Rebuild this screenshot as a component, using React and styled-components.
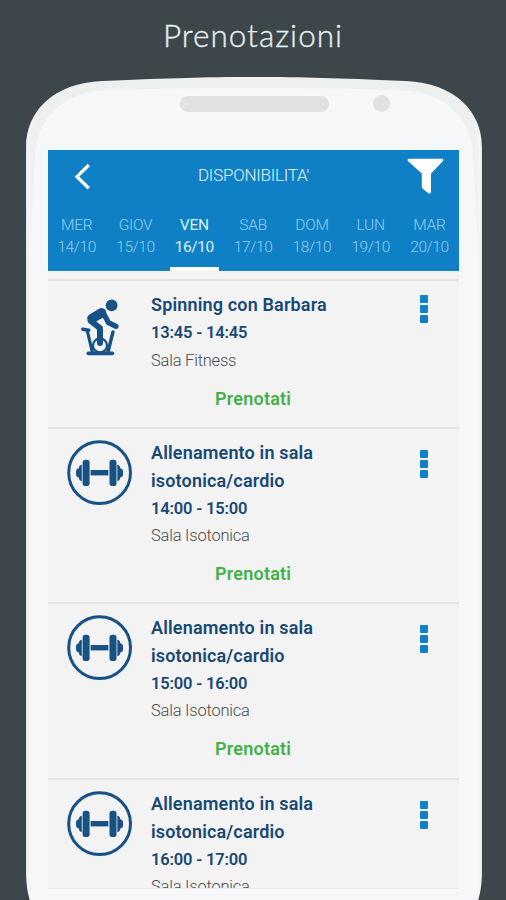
import React from "react";
import styled, { createGlobalStyle } from "styled-components";

const GlobalStyle = createGlobalStyle`
  * {
    box-sizing: border-box;
  }
  body {
    margin: 0;
    background: #3d464b;
    font-family: Roboto, "Liberation Sans", sans-serif;
  }
`;

const Page = styled.div`
  width: 506px;
  height: 900px;
  overflow: hidden;
  background: #3d464b;
`;

const Headline = styled.h1`
  margin: 0;
  height: 77px;
  padding-top: 15px;
  text-align: center;
  font: 300 31.5px/40px Lato, "Open Sans", sans-serif;
  letter-spacing: 1px;
  -webkit-text-stroke: 0.35px #e3eef1;
  color: #e3eef1;
`;

const Phone = styled.div`
  width: 456px;
  height: 823px;
  margin-left: 26px;
  background: linear-gradient(90deg, #dfe5e7 0, #f3f5f6 2px, #eeefef 8px, #eeefef 448px, #f3f5f6 454px, #dbe3e4 456px);
  clip-path: path("M0 823 V70 C0 34 28 6 76 4 C150 1 175 0 228 0 C281 0 306 1 380 4 C428 6 456 34 456 70 V796 C456 807 454 818 452 823 H4 C2 818 0 807 0 796 Z");
`;

const Face = styled.div`
  height: 823px;
  padding: 0 22px;
  background: #f6f7f9;
  clip-path: path("M3 823 V190 L9 76 C11 44 35 16 76 13.5 C150 11 175 11 228 11 C281 11 306 11 380 13.5 C421 16 445 44 447 76 L453 190 V823 Z");
`;

const Sensors = styled.div`
  display: flex;
  align-items: center;
  height: 73px;
  padding: 0 0 20px 132px;
`;

const Speaker = styled.span`
  width: 149px;
  height: 16px;
  border-radius: 8px;
  background: #e1e1e1;
`;

const Camera = styled.span`
  width: 17px;
  height: 17px;
  margin-left: 44px;
  border-radius: 50%;
  background: #e1e1e1;
`;

const Screen = styled.main`
  width: 411px;
  height: 739px;
  overflow: hidden;
  background: #f3f3f3;
  border-bottom: 1px solid #e9ebec;
`;

const Header = styled.header`
  height: 121px;
  background: #0f80c6;
`;

const TitleBar = styled.div`
  display: flex;
  justify-content: space-between;
  height: 61px;
  padding: 8px 15px 0 24px;
`;

const Title = styled.h2`
  margin: 7px 0 0 8px;
  font-size: 17px;
  line-height: 20px;
  font-weight: 300;
  letter-spacing: -0.25px;
  color: #e4f4fd;
`;

const IconButton = styled.button`
  display: flex;
  padding: 0;
  border: 0;
  background: none;
`;

const Days = styled.nav`
  display: grid;
  grid-template-columns: repeat(7, 58.8px);
  height: 60px;
  margin-left: -0.7px;
`;

const Day = styled.button`
  display: flex;
  flex-direction: column;
  align-items: center;
  height: 60px;
  padding: 3px 0 0;
  border: 0;
  background: none;
  font: ${({ $active }) => ($active ? 400 : 300)} 15.5px/22px Roboto, sans-serif;
  color: ${({ $active }) => ($active ? "#d9f1fd" : "#94cff0")};

  &:after {
    content: "";
    width: 49px;
    height: 4px;
    margin-top: auto;
    background: ${({ $active }) => ($active ? "#fff" : "transparent")};
  }
`;

const DayName = styled.span`
  letter-spacing: -0.25px;
`;

const DayDate = styled.span`
  letter-spacing: -0.4px;
`;

const List = styled.div`
  padding-top: 8px;
`;

const Row = styled.article`
  display: grid;
  grid-template-columns: 103px 1fr 70px;
  height: ${({ $height }) => $height}px;
  border-top: 2px solid #e4e4e4;
`;

const Figure = styled.div`
  padding: ${({ $top }) => $top}px 0 0 19px;
`;

const Name = styled.h3`
  margin: 0;
  font-size: 18px;
  line-height: 27.8px;
  font-weight: 600;
  letter-spacing: 0.16px;
  white-space: pre-line;
  color: #184874;
`;

const Info = styled.div`
  padding-top: 10px;
`;

const Time = styled.div`
  font-size: 16.5px;
  line-height: 27.8px;
  font-weight: 600;
  letter-spacing: -0.18px;
  color: #184874;
`;

const Room = styled.div`
  font-size: 16.5px;
  line-height: 27.8px;
  font-weight: 300;
  letter-spacing: -0.22px;
  color: #4c4c4c;
`;

const Book = styled.button`
  display: block;
  margin: 11.2px 0 0 64px;
  padding: 0;
  border: 0;
  background: none;
  font: 600 18px/26px Roboto, sans-serif;
  letter-spacing: 0.22px;
  color: #43b049;
`;

const More = styled.button`
  display: flex;
  flex-direction: column;
  align-items: flex-start;
  gap: 2px;
  padding: ${({ $top }) => $top}px 0 0 31px;
  border: 0;
  background: none;
`;

const Dot = styled.span`
  width: 8px;
  height: 8px;
  border-radius: 1px;
  background: #0f80c6;
`;

const BackIcon = () => (
  <svg width="20" height="36" viewBox="0 0 20 36" fill="none" stroke="#fff" strokeWidth="3.3">
    <path d="M16.8 7 5 18.7 16.8 30.3" />
  </svg>
);

const FilterIcon = () => (
  <svg width="37" height="38" viewBox="0 0 37 38" fill="#fff">
    <path d="M2 .8H35Q37 1 36 3L24 15.5V34Q23.5 36.6 21 35L15.7 30.7 14.8 29V15.5L1 3.2Q0 1.2 2 .8Z" />
  </svg>
);

const BikeIcon = () => (
  <svg width="66" height="66" viewBox="0 0 66 66" fill="none" stroke="#175185" strokeLinecap="round" strokeLinejoin="round">
    <circle cx="44.6" cy="14.3" r="5.9" fill="#175185" stroke="none" />
    <path d="M25 27.5 34.5 21.8" strokeWidth="9.6" />
    <path d="M36.5 22.3 41.5 31.7 49 35.3" strokeWidth="5.2" />
    <path d="M23.8 30 33 37.2 33 52" strokeWidth="6" />
    <path d="M15.7 38.3 21.8 39.2M46 41 40.7 62" strokeWidth="3.4" />
    <path d="M20.3 40 25.6 62" strokeWidth="3.2" />
    <circle cx="33" cy="54.4" r="7" strokeWidth="2.2" />
    <path d="M21.4 62.3H45.3" strokeWidth="3.8" />
  </svg>
);

const DumbbellIcon = () => (
  <svg width="66" height="66" viewBox="0 0 66 66" fill="#175185">
    <circle cx="32.6" cy="32.7" r="30.9" fill="none" stroke="#175185" strokeWidth="3" />
    <rect x="23.6" y="30" width="17.8" height="5.4" />
    <rect x="15.6" y="19.8" width="7" height="26.2" rx="2.8" />
    <rect x="42.5" y="19.8" width="7" height="26.2" rx="2.8" />
    <path d="M14.8 24.8V41Q12.2 41 11.8 37.5Q9 37 9 34V31.8Q9 28.8 11.8 28.3Q12.2 24.8 14.8 24.8ZM50.3 24.8V41Q52.9 41 53.3 37.5Q56.1 37 56.1 34V31.8Q56.1 28.8 53.3 28.3Q52.9 24.8 50.3 24.8Z" />
  </svg>
);

const days = [
  ["MER", "14/10"],
  ["GIOV", "15/10"],
  ["VEN", "16/10"],
  ["SAB", "17/10"],
  ["DOM", "18/10"],
  ["LUN", "19/10"],
  ["MAR", "20/10"],
];

const gymName = "Allenamento in sala\nisotonica/cardio";

const lessons = [
  { name: "Spinning con Barbara", time: "13:45 - 14:45", room: "Sala Fitness", bike: true, height: 148 },
  { name: gymName, time: "14:00 - 15:00", room: "Sala Isotonica", height: 175 },
  { name: gymName, time: "15:00 - 16:00", room: "Sala Isotonica", height: 176 },
  { name: gymName, time: "16:00 - 17:00", room: "Sala Isotonica", height: 176 },
];

const LessonRow = ({ name, time, room, bike, height }) => (
  <Row $height={height}>
    <Figure $top={bike ? 10 : 11}>{bike ? <BikeIcon /> : <DumbbellIcon />}</Figure>
    <Info>
      <Name>{name}</Name>
      <Time>{time}</Time>
      <Room>{room}</Room>
      <Book>Prenotati</Book>
    </Info>
    <More $top={bike ? 14 : 21} aria-label="Opzioni">
      <Dot />
      <Dot />
      <Dot />
    </More>
  </Row>
);

const App = () => (
  <Page>
    <GlobalStyle />
    <Headline>Prenotazioni</Headline>
    <Phone>
      <Face>
        <Sensors>
          <Speaker />
          <Camera />
        </Sensors>
        <Screen>
          <Header>
            <TitleBar>
              <IconButton aria-label="Indietro">
                <BackIcon />
              </IconButton>
              <Title>DISPONIBILITA'</Title>
              <IconButton aria-label="Filtra">
                <FilterIcon />
              </IconButton>
            </TitleBar>
            <Days>
              {days.map(([name, date]) => (
                <Day key={date} $active={name === "VEN"}>
                  <DayName>{name}</DayName>
                  <DayDate>{date}</DayDate>
                </Day>
              ))}
            </Days>
          </Header>
          <List>
            {lessons.map((lesson) => (
              <LessonRow key={lesson.time} {...lesson} />
            ))}
          </List>
        </Screen>
      </Face>
    </Phone>
  </Page>
);

export default App;
